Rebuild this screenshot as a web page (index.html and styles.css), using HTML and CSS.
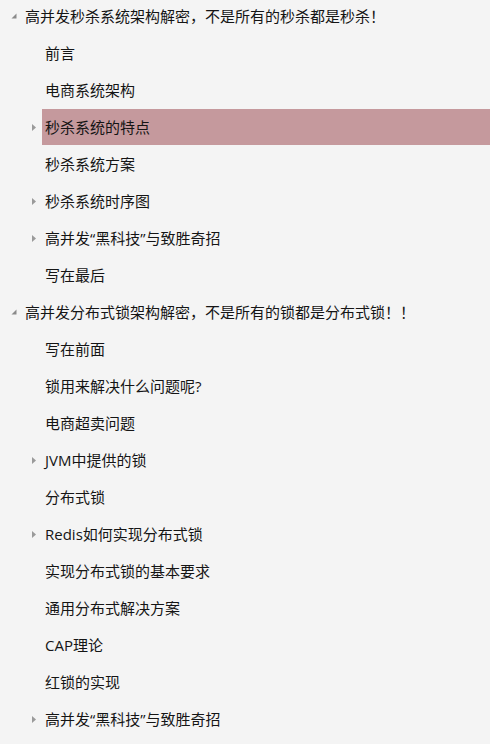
FILE: index.html
```html
<!DOCTYPE html>
<html lang="zh">
<head>
<meta charset="utf-8">
<link rel="stylesheet" href="styles.css">
</head>
<body>
<ul class="tree">
  <li class="row l1"><span class="tog"><svg width="6" height="6" viewBox="0 0 6 6"><path d="M5.5 0.5 L5.5 5.5 L0.5 5.5 Z" fill="#8a8a8a"/></svg></span><span class="label">高并发秒杀系统架构解密，不是所有的秒杀都是秒杀！</span></li>
  <li class="row l2"><span class="tog"></span><span class="label">前言</span></li>
  <li class="row l2"><span class="tog"></span><span class="label">电商系统架构</span></li>
  <li class="row l2"><span class="tog"><svg width="4" height="7" viewBox="0 0 4 7"><path d="M0 0 L4 3.5 L0 7 Z" fill="#9a9a9a"/></svg></span><span class="label sel">秒杀系统的特点</span></li>
  <li class="row l2"><span class="tog"></span><span class="label">秒杀系统方案</span></li>
  <li class="row l2"><span class="tog"><svg width="4" height="7" viewBox="0 0 4 7"><path d="M0 0 L4 3.5 L0 7 Z" fill="#9a9a9a"/></svg></span><span class="label">秒杀系统时序图</span></li>
  <li class="row l2"><span class="tog"><svg width="4" height="7" viewBox="0 0 4 7"><path d="M0 0 L4 3.5 L0 7 Z" fill="#9a9a9a"/></svg></span><span class="label">高并发“黑科技”与致胜奇招</span></li>
  <li class="row l2"><span class="tog"></span><span class="label">写在最后</span></li>
  <li class="row l1"><span class="tog"><svg width="6" height="6" viewBox="0 0 6 6"><path d="M5.5 0.5 L5.5 5.5 L0.5 5.5 Z" fill="#8a8a8a"/></svg></span><span class="label">高并发分布式锁架构解密，不是所有的锁都是分布式锁！！</span></li>
  <li class="row l2"><span class="tog"></span><span class="label">写在前面</span></li>
  <li class="row l2"><span class="tog"></span><span class="label">锁用来解决什么问题呢?</span></li>
  <li class="row l2"><span class="tog"></span><span class="label">电商超卖问题</span></li>
  <li class="row l2"><span class="tog"><svg width="4" height="7" viewBox="0 0 4 7"><path d="M0 0 L4 3.5 L0 7 Z" fill="#9a9a9a"/></svg></span><span class="label">JVM中提供的锁</span></li>
  <li class="row l2"><span class="tog"></span><span class="label">分布式锁</span></li>
  <li class="row l2"><span class="tog"><svg width="4" height="7" viewBox="0 0 4 7"><path d="M0 0 L4 3.5 L0 7 Z" fill="#9a9a9a"/></svg></span><span class="label">Redis如何实现分布式锁</span></li>
  <li class="row l2"><span class="tog"></span><span class="label">实现分布式锁的基本要求</span></li>
  <li class="row l2"><span class="tog"></span><span class="label">通用分布式解决方案</span></li>
  <li class="row l2"><span class="tog"></span><span class="label">CAP理论</span></li>
  <li class="row l2"><span class="tog"></span><span class="label">红锁的实现</span></li>
  <li class="row l2"><span class="tog"><svg width="4" height="7" viewBox="0 0 4 7"><path d="M0 0 L4 3.5 L0 7 Z" fill="#9a9a9a"/></svg></span><span class="label">高并发“黑科技”与致胜奇招</span></li>
</ul>
</body>
</html>
```

FILE: styles.css
```css
html, body {
  margin: 0;
  padding: 0;
  background: #f4f4f4;
  overflow: hidden;
}
body {
  font-family: "Open Sans", "Noto Sans CJK SC", sans-serif;
  font-size: 15px;
  color: #151515;
}
.tree {
  list-style: none;
  margin: -2px 0 0 0;
  padding: 0;
}
.row {
  display: flex;
  height: 37px;
  align-items: flex-start;
}
.l1 { padding-left: 8px; }
.l2 { padding-left: 28px; }
.tog {
  width: 14px;
  height: 36px;
  display: flex;
  align-items: center;
  flex: none;
}
.l1 .tog { padding-left: 3px; width: 11px; }
.l1 .tog svg { margin-top: -1px; }
.l2 .tog { padding-left: 4px; width: 10px; }
.label {
  flex: 1;
  height: 36px;
  line-height: 36px;
  padding-left: 3px;
  white-space: nowrap;
}
.sel {
  background: #c5999d;
}
```
